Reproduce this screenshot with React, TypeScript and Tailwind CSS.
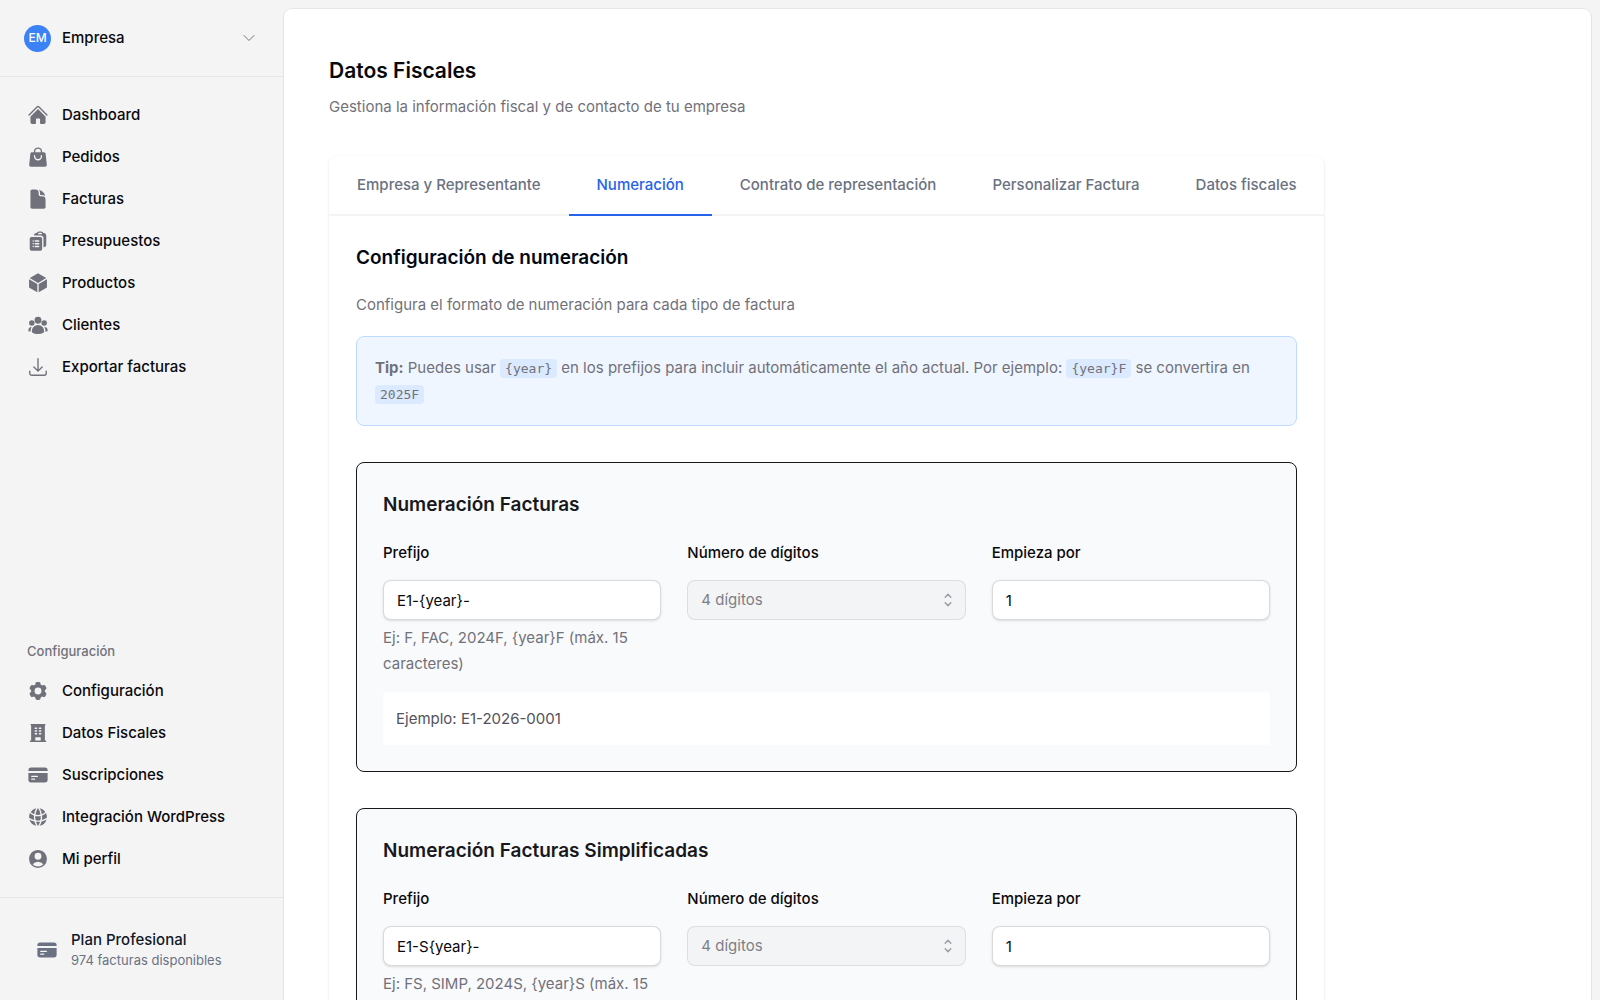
import React from 'react';
import {
  HiArrowDownTray,
  HiBuildingOffice,
  HiClipboardDocumentList,
  HiCog6Tooth,
  HiCreditCard,
  HiCube,
  HiDocument,
  HiGlobeAlt,
  HiHome,
  HiOutlineArrowDownTray,
  HiOutlineChevronDown,
  HiShoppingBag,
  HiUserCircle,
  HiUserGroup,
} from 'react-icons/hi2';

type NavEntry = { label: string; icon: typeof HiArrowDownTray };

const mainNav: NavEntry[] = [
  { label: 'Dashboard', icon: HiHome },
  { label: 'Pedidos', icon: HiShoppingBag },
  { label: 'Facturas', icon: HiDocument },
  { label: 'Presupuestos', icon: HiClipboardDocumentList },
  { label: 'Productos', icon: HiCube },
  { label: 'Clientes', icon: HiUserGroup },
  { label: 'Exportar facturas', icon: HiOutlineArrowDownTray },
];

const configNav: NavEntry[] = [
  { label: 'Configuración', icon: HiCog6Tooth },
  { label: 'Datos Fiscales', icon: HiBuildingOffice },
  { label: 'Suscripciones', icon: HiCreditCard },
  { label: 'Integración WordPress', icon: HiGlobeAlt },
  { label: 'Mi perfil', icon: HiUserCircle },
];

const tabs = [
  'Empresa y Representante',
  'Numeración',
  'Contrato de representación',
  'Personalizar Factura',
  'Datos fiscales',
];

function NavItem({ label, icon: Icon }: NavEntry) {
  return (
    <a href="#" className="flex h-10 items-center gap-[13px] rounded-lg px-[9px] font-medium text-zinc-950 hover:bg-zinc-950/5">
      <Icon className="size-[22px] text-zinc-500" />
      {label}
    </a>
  );
}

function Sidebar() {
  return (
    <aside className="sticky top-0 flex h-screen w-[284px] shrink-0 flex-col text-[15px]">
      <div className="border-b border-zinc-950/5 px-4 py-[17px]">
        <button className="flex h-[42px] w-full items-center gap-[11px] px-2 font-medium text-zinc-950">
          <span className="flex size-[27px] items-center justify-center rounded-full bg-[#3b82f6] text-xs font-medium text-white">
            EM
          </span>
          <span className="flex-1 text-left">Empresa</span>
          <HiOutlineChevronDown className="mr-[3px] size-4 text-zinc-500" />
        </button>
      </div>

      <nav className="flex flex-1 flex-col px-[18px] pt-[18px] pb-[18px]">
        <div className="flex flex-col gap-0.5">
          {mainNav.map((item) => (
            <NavItem key={item.label} {...item} />
          ))}
        </div>
        <div className="mt-auto flex flex-col gap-0.5">
          <h3 className="mb-1 px-[9px] text-[13px] leading-7 font-medium text-zinc-500">Configuración</h3>
          {configNav.map((item) => (
            <NavItem key={item.label} {...item} />
          ))}
        </div>
      </nav>

      <div className="border-t border-zinc-950/5 px-9 pt-8 pb-[30px]">
        <div className="flex items-center gap-[13px]">
          <HiCreditCard className="size-[22px] text-gray-500" />
          <div>
            <p className="leading-5 font-medium text-gray-900">Plan Profesional</p>
            <p className="text-[13px] leading-5 text-gray-500">974 facturas disponibles</p>
          </div>
        </div>
      </div>
    </aside>
  );
}

function Code({ children }: { children: React.ReactNode }) {
  return (
    <code className="rounded-sm bg-blue-100 px-[5px] py-0.5 font-['DejaVu_Sans_Mono',monospace] text-[13px] leading-none">
      {children}
    </code>
  );
}

type NumberingProps = {
  id: string;
  title: string;
  prefix: string;
  hint: string;
  example: string;
};

const inputClass =
  'h-10 w-full rounded-lg border border-zinc-950/15 bg-white px-[13px] text-zinc-950 shadow-sm outline-none focus:border-blue-500';

function NumberingCard({ id, title, prefix, hint, example }: NumberingProps) {
  return (
    <section className="rounded-lg border border-zinc-900 bg-gray-50 p-[26px]">
      <h3 className="text-[19px] leading-8 font-semibold text-zinc-900">{title}</h3>
      <div className="mt-[19px] grid grid-cols-3 gap-[26px]">
        <div>
          <label htmlFor={`${id}-prefix`} className="font-medium text-zinc-950">Prefijo</label>
          <input id={`${id}-prefix`} defaultValue={prefix} className={`mt-[14px] ${inputClass}`} />
          <p className="mt-[5px] text-zinc-500">{hint}</p>
        </div>
        <div>
          <label htmlFor={`${id}-digits`} className="font-medium text-zinc-950">Número de dígitos</label>
          <div className="relative mt-[14px]">
            <select
              id={`${id}-digits`}
              disabled
              className="h-10 w-full appearance-none rounded-lg border border-zinc-950/10 bg-gray-100 px-[13px] text-zinc-500 opacity-90"
            >
              <option>4 dígitos</option>
            </select>
            <svg
              viewBox="0 0 16 16"
              fill="none"
              stroke="currentColor"
              strokeWidth="1.5"
              strokeLinecap="round"
              strokeLinejoin="round"
              className="pointer-events-none absolute top-3 right-2.5 size-4 text-zinc-400"
            >
              <path d="M5.2 5.2 8 2.4l2.8 2.8M5.2 10.8 8 13.6l2.8-2.8" />
            </svg>
          </div>
        </div>
        <div>
          <label htmlFor={`${id}-start`} className="font-medium text-zinc-950">Empieza por</label>
          <input id={`${id}-start`} defaultValue="1" className={`mt-[14px] ${inputClass}`} />
        </div>
      </div>
      <div className="mt-[15px] rounded-sm bg-white p-[13px] leading-[27px] text-zinc-600">
        Ejemplo: {example}
      </div>
    </section>
  );
}

export default function App() {
  return (
    <div className="flex min-h-screen bg-zinc-100 font-['Inter',sans-serif] text-[15px] leading-[26px]">
      <Sidebar />
      <main className="mt-[9px] mr-[9px] mb-[9px] min-w-0 flex-1 rounded-lg bg-white px-[45px] py-11 shadow-xs ring-1 ring-zinc-950/5">
        <h1 className="text-[21px] leading-9 font-semibold text-zinc-950">Datos Fiscales</h1>
        <p className="mt-[5px] text-zinc-500">Gestiona la información fiscal y de contacto de tu empresa</p>

        <div className="mt-9 max-w-[995px] overflow-hidden rounded-lg bg-white shadow-sm">
          <div className="flex border-b-2 border-zinc-100">
            {tabs.map((tab) => (
              <button
                key={tab}
                className={
                  tab === 'Numeración'
                    ? '-mb-0.5 shrink-0 border-b-2 border-[#2563eb] px-7 py-4 font-medium text-[#2563eb]'
                    : '-mb-0.5 shrink-0 border-b-2 border-transparent px-7 py-4 font-medium text-gray-500 hover:text-gray-700'
                }
              >
                {tab}
              </button>
            ))}
          </div>

          <div className="px-[27px] pt-[26px] pb-[27px]">
            <h2 className="text-[19px] leading-8 font-semibold text-gray-950">Configuración de numeración</h2>
            <p className="mt-[18px] text-zinc-500">Configura el formato de numeración para cada tipo de factura</p>

            <div className="mt-[18px] rounded-lg border border-blue-200 bg-blue-50 p-[18px] text-zinc-500">
              <strong>Tip:</strong> Puedes usar <Code>{'{year}'}</Code> en los prefijos para incluir automáticamente el
              año actual. Por ejemplo: <Code>{'{year}F'}</Code> se convertira en <Code>2025F</Code>
            </div>

            <div className="mt-9 flex flex-col gap-9">
              <NumberingCard
                id="invoices"
                title="Numeración Facturas"
                prefix="E1-{year}-"
                hint="Ej: F, FAC, 2024F, {year}F (máx. 15 caracteres)"
                example="E1-2026-0001"
              />
              <NumberingCard
                id="simplified"
                title="Numeración Facturas Simplificadas"
                prefix="E1-S{year}-"
                hint="Ej: FS, SIMP, 2024S, {year}S (máx. 15 caracteres)"
                example="E1-S2026-0001"
              />
            </div>
          </div>
        </div>
      </main>
    </div>
  );
}
